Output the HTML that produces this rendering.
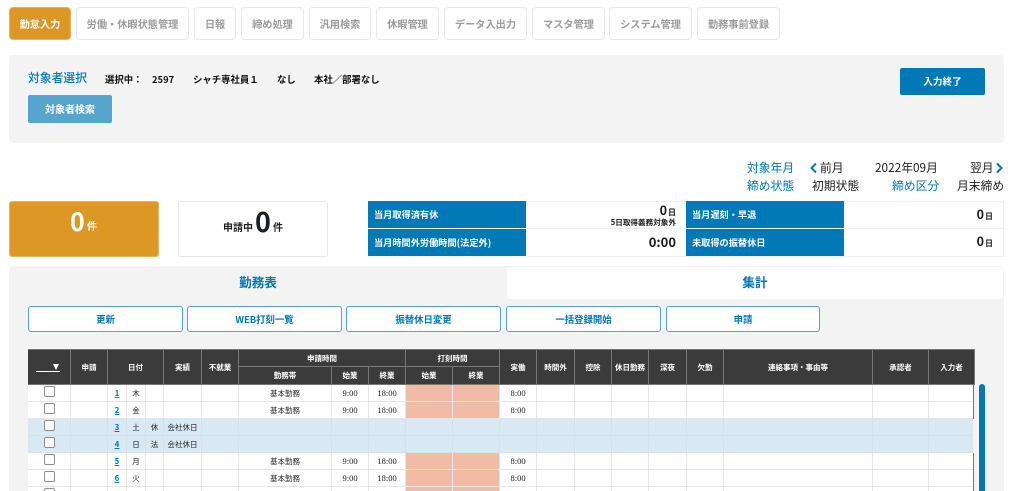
<!DOCTYPE html>
<html lang="ja">
<head>
<meta charset="utf-8">
<title>勤怠入力</title>
<style>
*{box-sizing:border-box}
html,body{margin:0;padding:0;width:1014px;height:491px;overflow:hidden;background:#fff}
body{position:relative;font-family:"Noto Sans CJK JP","Liberation Sans",sans-serif;color:#222}
.a{position:absolute;white-space:nowrap}
.nav{position:absolute;top:7px;height:33px;border:1px solid #e8e8e8;border-radius:4px;background:#fff;color:#9c9c9c;font-weight:700;font-size:10.2px;line-height:31px;text-align:center;white-space:nowrap}
.nav.on{background:#dd9725;border-color:#e6b260;color:#fff}
.bl{color:#0078b5}
.lab{position:absolute;background:#0079b6;color:#fff;font-weight:700;font-size:9.2px;padding-left:6px;line-height:27px;white-space:nowrap}
.btn{position:absolute;top:306px;height:26px;background:#fff;border:1px solid #56a5cf;border-radius:3px;color:#0078b5;font-weight:700;font-size:9.4px;line-height:25px;text-align:center;white-space:nowrap}
.r{position:absolute;text-align:right;white-space:nowrap;font-weight:700;color:#1a1a1a}
.r small{font-size:8px;font-weight:700;margin-left:1px}
table{position:absolute;left:27px;top:349px;width:947px;border-collapse:collapse;table-layout:fixed;background:#fff}
th{background:#3b3b3b;color:#fff;font-size:7.5px;font-weight:700;border:1px solid #777;padding:0;text-align:center;overflow:hidden;white-space:nowrap}
td{border:1px solid #e6e6e6;height:17px;padding:0;text-align:center;font-size:7.5px;color:#222;overflow:hidden;white-space:nowrap;line-height:15px}
td.t{font-family:"Liberation Serif",serif;font-size:8.5px}
td a{color:#0078b5;font-weight:700;font-size:8px;text-decoration:underline}
td.p{background:#f2bba5}
tr.h td{background:#d9e9f3;border-color:#d3e2ec}
.cb{display:block;width:11px;height:11px;margin:0 auto 4px;border:1px solid #8f8f8f;border-radius:2px;background:#fff}
</style>
</head>
<body>
<div class="nav on" style="left:9px;width:62px">勤怠入力</div>
<div class="nav" style="left:76px;width:113px">労働・休暇状態管理</div>
<div class="nav" style="left:194px;width:42px">日報</div>
<div class="nav" style="left:241px;width:63px">締め処理</div>
<div class="nav" style="left:309px;width:62px">汎用検索</div>
<div class="nav" style="left:376px;width:63px">休暇管理</div>
<div class="nav" style="left:444px;width:83px">データ入出力</div>
<div class="nav" style="left:532px;width:73px">マスタ管理</div>
<div class="nav" style="left:609px;width:83px">システム管理</div>
<div class="nav" style="left:697px;width:83px">勤務事前登録</div>

<div class="a" style="left:9px;top:55px;width:995px;height:88px;background:#f3f3f3;border-radius:4px"></div>
<div class="a bl" style="left:28px;top:69px;font-size:11.8px;line-height:18px;font-weight:500">対象者選択</div>
<div class="a" style="left:105px;top:71px;font-size:9.4px;line-height:16px;font-weight:700;color:#111">選択中：</div>
<div class="a" style="left:152px;top:71px;font-size:9.4px;line-height:16px;font-weight:700;color:#111">2597</div>
<div class="a" style="left:193px;top:71px;font-size:9.4px;line-height:16px;font-weight:700;color:#111">シャチ専社員１</div>
<div class="a" style="left:277px;top:71px;font-size:9.4px;line-height:16px;font-weight:700;color:#111">なし</div>
<div class="a" style="left:314px;top:71px;font-size:9.4px;line-height:16px;font-weight:700;color:#111">本社／部署なし</div>
<div class="a" style="left:28px;top:95px;width:84px;height:28px;background:#56a5cf;border-radius:2px;color:#fff;font-size:10px;font-weight:700;line-height:28px;text-align:center">対象者検索</div>
<div class="a" style="left:900px;top:68px;width:85px;height:27px;background:#0079b6;border-radius:2px;color:#fff;font-size:9.6px;font-weight:700;line-height:27px;text-align:center">入力終了</div>

<div class="a bl" style="left:747px;top:159px;font-size:11.8px;line-height:18px">対象年月</div>
<svg class="a" style="left:809px;top:162px" width="9" height="12" viewBox="0 0 9 12"><path d="M7 1.5L2.5 6L7 10.5" fill="none" stroke="#0078b5" stroke-width="2"/></svg>
<div class="a" style="left:820px;top:159px;font-size:11.8px;line-height:18px">前月</div>
<div class="a" style="left:875px;top:159px;font-size:11.8px;line-height:18px">2022年09月</div>
<div class="a" style="left:970px;top:159px;font-size:11.8px;line-height:18px">翌月</div>
<svg class="a" style="left:995px;top:162px" width="9" height="12" viewBox="0 0 9 12"><path d="M2 1.5L6.5 6L2 10.5" fill="none" stroke="#0078b5" stroke-width="2"/></svg>
<div class="a bl" style="left:747px;top:177px;font-size:11.8px;line-height:18px">締め状態</div>
<div class="a" style="left:812px;top:177px;font-size:11.8px;line-height:18px">初期状態</div>
<div class="a bl" style="left:892px;top:177px;font-size:11.8px;line-height:18px">締め区分</div>
<div class="a" style="left:957px;top:177px;font-size:11.8px;line-height:18px">月末締め</div>

<div class="a" style="left:8.5px;top:200.5px;width:150px;height:56px;background:#dd9725;border:1px solid #e6b260;border-radius:3px"></div>
<div class="a" style="left:70px;top:203px;font-size:25px;line-height:36px;font-weight:700;color:#fff">0</div>
<div class="a" style="left:87px;top:218px;font-size:10px;line-height:15px;font-weight:700;color:#fff">件</div>
<div class="a" style="left:178px;top:200.5px;width:150px;height:56px;background:#fff;border:1px solid #e8e8e8;border-radius:3px"></div>
<div class="a" style="left:223px;top:219px;font-size:10px;line-height:15px;font-weight:700">申請中</div>
<div class="a" style="left:255px;top:203px;font-size:27px;line-height:36px;font-weight:700;color:#1a1f26">0</div>
<div class="a" style="left:273px;top:219px;font-size:10px;line-height:15px;font-weight:700">件</div>

<div class="a" style="left:526px;top:201px;width:478px;height:56px;border:1px solid #f0f0f0;border-left:0"></div>
<div class="a" style="left:526px;top:228px;width:478px;height:1px;background:#f0f0f0"></div>
<div class="lab" style="left:368px;top:201px;width:158px;height:27px">当月取得済有休</div>
<div class="lab" style="left:368px;top:229px;width:158px;height:27px">当月時間外労働時間(法定外)</div>
<div class="lab" style="left:686px;top:201px;width:158px;height:27px">当月遅刻・早退</div>
<div class="lab" style="left:686px;top:229px;width:158px;height:27px">未取得の振替休日</div>
<div class="r" style="right:338px;top:201px;font-size:12.5px;line-height:17px">0<small>日</small></div>
<div class="r" style="right:338px;top:217px;font-size:7.6px;line-height:11px">5日取得義務対象外</div>
<div class="r" style="right:338px;top:233px;font-size:13px;line-height:17px">0:00</div>
<div class="r" style="right:21px;top:205px;font-size:12.5px;line-height:17px">0<small>日</small></div>
<div class="r" style="right:21px;top:232px;font-size:12.5px;line-height:17px">0<small>日</small></div>

<div class="a" style="left:9px;top:266px;width:995px;height:226px;background:#f3f3f3;border-radius:4px 4px 0 0"></div>
<div class="a" style="left:507px;top:267px;width:496px;height:32px;background:#fff;border-radius:3px"></div>
<div class="a bl" style="left:9px;top:273px;width:498px;text-align:center;font-size:12.6px;line-height:18px;font-weight:700">勤務表</div>
<div class="a bl" style="left:507px;top:273px;width:496px;text-align:center;font-size:12.6px;line-height:18px;font-weight:700">集計</div>

<div class="btn" style="left:28px;width:155px">更新</div>
<div class="btn" style="left:187px;width:155px">WEB打刻一覧</div>
<div class="btn" style="left:346px;width:155px">振替休日変更</div>
<div class="btn" style="left:506px;width:155px">一括登録開始</div>
<div class="btn" style="left:666px;width:154px">申請</div>

<table>
<colgroup>
<col style="width:43px"><col style="width:37px"><col style="width:19px"><col style="width:19px"><col style="width:18px"><col style="width:38px"><col style="width:37px"><col style="width:93px"><col style="width:37px"><col style="width:37px"><col style="width:47px"><col style="width:47px"><col style="width:37px"><col style="width:38px"><col style="width:37px"><col style="width:37px"><col style="width:38px"><col style="width:37px"><col style="width:149px"><col style="width:56px"><col style="width:46px">
</colgroup>
<tr style="height:17px">
<th rowspan="2"><div style="position:relative;width:24px;height:9px;margin:0 0 0 8px;border-bottom:1px solid #fff"><span style="position:absolute;right:1px;top:1px;width:0;height:0;border-left:3.5px solid transparent;border-right:3.5px solid transparent;border-top:6px solid #fff"></span></div></th>
<th rowspan="2">申請</th><th rowspan="2" colspan="3">日付</th><th rowspan="2">実績</th><th rowspan="2">不就業</th>
<th colspan="3">申請時間</th><th colspan="2">打刻時間</th>
<th rowspan="2">実働</th><th rowspan="2">時間外</th><th rowspan="2">控除</th><th rowspan="2">休日勤務</th><th rowspan="2">深夜</th><th rowspan="2">欠勤</th><th rowspan="2">連絡事項・事由等</th><th rowspan="2">承認者</th><th rowspan="2">入力者</th>
</tr>
<tr style="height:18px"><th>勤務帯</th><th>始業</th><th>終業</th><th>始業</th><th>終業</th></tr>
<tr><td><span class="cb"></span></td><td></td><td><a>1</a></td><td>木</td><td></td><td></td><td></td><td>基本勤務</td><td class="t">9:00</td><td class="t">18:00</td><td class="p"></td><td class="p"></td><td class="t">8:00</td><td></td><td></td><td></td><td></td><td></td><td></td><td></td><td></td></tr>
<tr><td><span class="cb"></span></td><td></td><td><a>2</a></td><td>金</td><td></td><td></td><td></td><td>基本勤務</td><td class="t">9:00</td><td class="t">18:00</td><td class="p"></td><td class="p"></td><td class="t">8:00</td><td></td><td></td><td></td><td></td><td></td><td></td><td></td><td></td></tr>
<tr class="h"><td><span class="cb"></span></td><td></td><td><a>3</a></td><td>土</td><td>休</td><td>会社休日</td><td></td><td></td><td></td><td></td><td></td><td></td><td></td><td></td><td></td><td></td><td></td><td></td><td></td><td></td><td></td></tr>
<tr class="h"><td><span class="cb"></span></td><td></td><td><a>4</a></td><td>日</td><td>法</td><td>会社休日</td><td></td><td></td><td></td><td></td><td></td><td></td><td></td><td></td><td></td><td></td><td></td><td></td><td></td><td></td><td></td></tr>
<tr><td><span class="cb"></span></td><td></td><td><a>5</a></td><td>月</td><td></td><td></td><td></td><td>基本勤務</td><td class="t">9:00</td><td class="t">18:00</td><td class="p"></td><td class="p"></td><td class="t">8:00</td><td></td><td></td><td></td><td></td><td></td><td></td><td></td><td></td></tr>
<tr><td><span class="cb"></span></td><td></td><td><a>6</a></td><td>火</td><td></td><td></td><td></td><td>基本勤務</td><td class="t">9:00</td><td class="t">18:00</td><td class="p"></td><td class="p"></td><td class="t">8:00</td><td></td><td></td><td></td><td></td><td></td><td></td><td></td><td></td></tr>
<tr><td><span class="cb"></span></td><td></td><td><a>7</a></td><td>水</td><td></td><td></td><td></td><td>基本勤務</td><td class="t">9:00</td><td class="t">18:00</td><td class="p"></td><td class="p"></td><td class="t">8:00</td><td></td><td></td><td></td><td></td><td></td><td></td><td></td><td></td></tr>
</table>
<div class="a" style="left:26px;top:349px;width:2px;height:142px;background:#f3f3f3"></div>
<div class="a" style="left:973px;top:385px;width:4px;height:106px;background:#f3f3f3"></div>
<div class="a" style="left:973px;top:385px;width:1px;height:34px;background:#777"></div>
<div class="a" style="left:973px;top:453px;width:1px;height:38px;background:#777"></div>
<div class="a" style="left:979px;top:384px;width:6px;height:120px;background:#0079b6;border-radius:3px"></div>
</body>
</html>
